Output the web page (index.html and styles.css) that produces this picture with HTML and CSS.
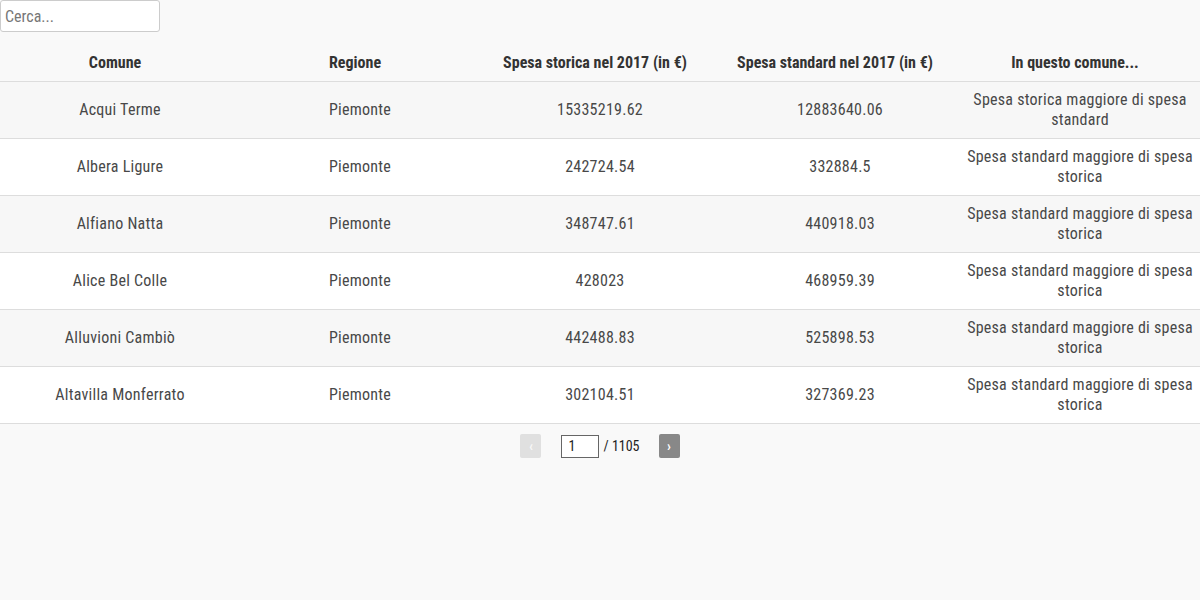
FILE: index.html
```html
<!DOCTYPE html>
<html lang="it">
<head>
<meta charset="utf-8">
<link rel="stylesheet" href="styles.css">
</head>
<body>
<div class="page">
  <input class="search" type="text" placeholder="Cerca...">
  <table class="data">
    <thead>
      <tr>
        <th>Comune</th>
        <th>Regione</th>
        <th>Spesa storica nel 2017 (in €)</th>
        <th>Spesa standard nel 2017 (in €)</th>
        <th>In questo comune...</th>
      </tr>
    </thead>
    <tbody>
      <tr><td>Acqui Terme</td><td>Piemonte</td><td>15335219.62</td><td>12883640.06</td><td>Spesa storica maggiore di spesa standard</td></tr>
      <tr><td>Albera Ligure</td><td>Piemonte</td><td>242724.54</td><td>332884.5</td><td>Spesa standard maggiore di spesa storica</td></tr>
      <tr><td>Alfiano Natta</td><td>Piemonte</td><td>348747.61</td><td>440918.03</td><td>Spesa standard maggiore di spesa storica</td></tr>
      <tr><td>Alice Bel Colle</td><td>Piemonte</td><td>428023</td><td>468959.39</td><td>Spesa standard maggiore di spesa storica</td></tr>
      <tr><td>Alluvioni Cambiò</td><td>Piemonte</td><td>442488.83</td><td>525898.53</td><td>Spesa standard maggiore di spesa storica</td></tr>
      <tr><td>Altavilla Monferrato</td><td>Piemonte</td><td>302104.51</td><td>327369.23</td><td>Spesa standard maggiore di spesa storica</td></tr>
    </tbody>
  </table>
  <div class="pager">
    <button class="pbtn disabled" type="button">‹</button>
    <input class="pinput" type="text" value="1">
    <span class="ptotal">/ 1105</span>
    <button class="pbtn" type="button">›</button>
  </div>
</div>
</body>
</html>
```

FILE: styles.css
```css
html, body {
  margin: 0;
  padding: 0;
  background: #f9f9f9;
}
body {
  font-family: "Roboto Condensed", "Roboto", "Liberation Sans", sans-serif;
  color: #333;
}
.page {
  width: 1200px;
}
.search {
  display: block;
  box-sizing: border-box;
  width: 160px;
  height: 32px;
  margin: 0;
  padding: 0 4px;
  border: 1px solid #ccc;
  border-radius: 3px;
  background: #fff;
  font-family: inherit;
  font-size: 16px;
  color: #333;
}
.search::placeholder {
  color: #777;
}
.data {
  width: 1200px;
  margin-top: 9px;
  border-collapse: collapse;
  table-layout: fixed;
}
.data th {
  height: 38px;
  padding: 2px 10px 0 0;
  font-size: 16px;
  font-weight: 700;
  text-align: center;
  border-bottom: 1px solid #ddd;
  color: #333;
}
.data td {
  height: 56px;
  padding: 0 4px;
  font-size: 16px;
  font-weight: 400;
  letter-spacing: 0.25px;
  line-height: 20px;
  text-align: center;
  border-bottom: 1px solid #ddd;
  color: #484848;
}
.data tbody tr:nth-child(odd) {
  background: #f7f7f7;
}
.data tbody tr:nth-child(even) {
  background: #fff;
}
.pager {
  display: flex;
  justify-content: center;
  align-items: center;
  margin-top: 10px;
  font-size: 14px;
}
.pbtn {
  width: 21px;
  height: 24px;
  padding: 0;
  border: 0;
  border-radius: 2px;
  background: #888;
  color: #fff;
  font-size: 14px;
  font-weight: 700;
  font-family: inherit;
}
.pbtn.disabled {
  background: #e0e0e0;
  color: #f8f8f8;
}
.pinput {
  box-sizing: border-box;
  width: 38px;
  height: 23px;
  margin-left: 20px;
  padding: 0 6px;
  border: 1px solid #666;
  background: #fff;
  font-family: inherit;
  font-size: 14px;
  color: #222;
}
.ptotal {
  margin-left: 4px;
  margin-right: 19px;
  color: #222;
}
```
